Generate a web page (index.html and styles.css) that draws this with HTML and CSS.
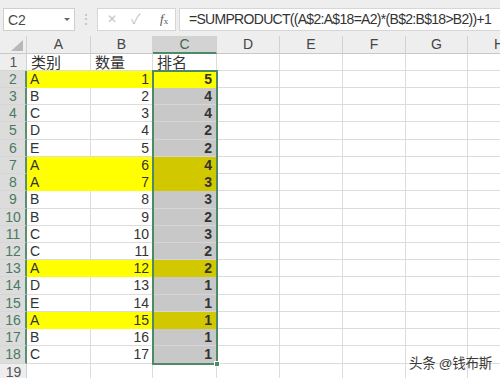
FILE: index.html
```html
<!DOCTYPE html>
<html>
<head>
<meta charset="utf-8">
<link rel="stylesheet" href="styles.css">
</head>
<body>
<div class="app">
  <div class="fbar">
    <div class="namebox"><span>C2</span><span class="dd"></span></div>
    <div class="grip">⋮</div>
    <div class="fbtns">
      <span class="btn x">✕</span>
      <span class="btn ok">✓</span>
      <span class="btn fx"><i>f</i><sub>x</sub></span>
    </div>
    <div class="formula">=SUMPRODUCT((A$2:A$18=A2)*(B$2:B$18&gt;B2))+1</div>
  </div>
  <div class="sheet">
    <div class="corner"><span class="tri"></span></div>
    <div class="ch">A</div><div class="ch">B</div><div class="ch sel">C</div><div class="ch">D</div><div class="ch">E</div><div class="ch">F</div><div class="ch">G</div><div class="ch">H</div>

    <div class="rh">1</div><div class="c cj">类别</div><div class="c cj">数量</div><div class="c cj">排名</div><div class="c"></div><div class="c"></div><div class="c"></div><div class="c"></div><div class="c"></div>

    <div class="rh s">2</div><div class="c y">A</div><div class="c y n">1</div><div class="c y n b">5</div><div class="c"></div><div class="c"></div><div class="c"></div><div class="c"></div><div class="c"></div>
    <div class="rh s">3</div><div class="c">B</div><div class="c n">2</div><div class="c g n b">4</div><div class="c"></div><div class="c"></div><div class="c"></div><div class="c"></div><div class="c"></div>
    <div class="rh s">4</div><div class="c">C</div><div class="c n">3</div><div class="c g n b">4</div><div class="c"></div><div class="c"></div><div class="c"></div><div class="c"></div><div class="c"></div>
    <div class="rh s">5</div><div class="c">D</div><div class="c n">4</div><div class="c g n b">2</div><div class="c"></div><div class="c"></div><div class="c"></div><div class="c"></div><div class="c"></div>
    <div class="rh s">6</div><div class="c">E</div><div class="c n">5</div><div class="c g n b">2</div><div class="c"></div><div class="c"></div><div class="c"></div><div class="c"></div><div class="c"></div>
    <div class="rh s">7</div><div class="c y">A</div><div class="c y n">6</div><div class="c o n b">4</div><div class="c"></div><div class="c"></div><div class="c"></div><div class="c"></div><div class="c"></div>
    <div class="rh s">8</div><div class="c y">A</div><div class="c y n">7</div><div class="c o n b">3</div><div class="c"></div><div class="c"></div><div class="c"></div><div class="c"></div><div class="c"></div>
    <div class="rh s">9</div><div class="c">B</div><div class="c n">8</div><div class="c g n b">3</div><div class="c"></div><div class="c"></div><div class="c"></div><div class="c"></div><div class="c"></div>
    <div class="rh s">10</div><div class="c">B</div><div class="c n">9</div><div class="c g n b">2</div><div class="c"></div><div class="c"></div><div class="c"></div><div class="c"></div><div class="c"></div>
    <div class="rh s">11</div><div class="c">C</div><div class="c n">10</div><div class="c g n b">3</div><div class="c"></div><div class="c"></div><div class="c"></div><div class="c"></div><div class="c"></div>
    <div class="rh s">12</div><div class="c">C</div><div class="c n">11</div><div class="c g n b">2</div><div class="c"></div><div class="c"></div><div class="c"></div><div class="c"></div><div class="c"></div>
    <div class="rh s">13</div><div class="c y">A</div><div class="c y n">12</div><div class="c o n b">2</div><div class="c"></div><div class="c"></div><div class="c"></div><div class="c"></div><div class="c"></div>
    <div class="rh s">14</div><div class="c">D</div><div class="c n">13</div><div class="c g n b">1</div><div class="c"></div><div class="c"></div><div class="c"></div><div class="c"></div><div class="c"></div>
    <div class="rh s">15</div><div class="c">E</div><div class="c n">14</div><div class="c g n b">1</div><div class="c"></div><div class="c"></div><div class="c"></div><div class="c"></div><div class="c"></div>
    <div class="rh s">16</div><div class="c y">A</div><div class="c y n">15</div><div class="c o n b">1</div><div class="c"></div><div class="c"></div><div class="c"></div><div class="c"></div><div class="c"></div>
    <div class="rh s">17</div><div class="c">B</div><div class="c n">16</div><div class="c g n b">1</div><div class="c"></div><div class="c"></div><div class="c"></div><div class="c"></div><div class="c"></div>
    <div class="rh s">18</div><div class="c">C</div><div class="c n">17</div><div class="c g n b">1</div><div class="c"></div><div class="c"></div><div class="c"></div><div class="c"></div><div class="c"></div>
    <div class="rh">19</div><div class="c"></div><div class="c"></div><div class="c"></div><div class="c"></div><div class="c"></div><div class="c"></div><div class="c"></div><div class="c"></div>

    <div class="selbox"><span class="handle"></span></div>
    <div class="mark">头条 @钱布斯</div>
  </div>
</div>
</body>
</html>
```

FILE: styles.css
```css
* { box-sizing: border-box; }
html, body { margin: 0; padding: 0; }
body {
  width: 500px;
  height: 378px;
  overflow: hidden;
  background: #ffffff;
  font-family: "Liberation Sans", "Noto Sans CJK SC", sans-serif;
  color: #333;
}
.app { width: 500px; height: 378px; overflow: hidden; }

.fbar {
  height: 36px;
  background: #eeeeee;
  display: flex;
  align-items: flex-start;
  padding-top: 8px;
  padding-left: 3px;
}
.namebox {
  width: 72px;
  height: 23px;
  background: #fff;
  border: 1px solid #cfcfcf;
  display: flex;
  align-items: center;
  justify-content: space-between;
  padding: 0 4px 0 4px;
  font-size: 14px;
  color: #4a4a4a;
}
.dd {
  width: 0; height: 0;
  border-left: 3px solid transparent;
  border-right: 3px solid transparent;
  border-top: 3px solid #666;
}
.grip {
  width: 22px;
  text-align: center;
  color: #b5b5b5;
  font-size: 12px;
  line-height: 23px;
}
.fbtns {
  width: 79px;
  height: 23px;
  background: #fff;
  border: 1px solid #d6d6d6;
  display: flex;
  align-items: center;
  padding-left: 9px;
}
.btn { color: #c4c4c4; font-size: 12px; line-height: 21px; }
.btn.x { width: 24px; }
.btn.ok { width: 29px; font-size: 14px; }
.btn.fx { color: #555; font-family: "Liberation Serif", serif; font-size: 13px; }
.btn.fx sub { font-size: 9px; vertical-align: -1px; }
.formula {
  flex: 1;
  height: 23px;
  margin-left: 3px;
  background: #fff;
  border: 1px solid #d6d6d6;
  border-right: none;
  font-size: 14px;
  letter-spacing: -0.7px;
  line-height: 21px;
  padding-left: 9px;
  color: #333;
  white-space: nowrap;
}

.sheet {
  position: relative;
  display: grid;
  grid-template-columns: 27px 64px 62px 64px 63px 63px 63px 62px 63px;
  grid-template-rows: 17.6px repeat(19, 17.23px);
  background: #fff;
}
.corner {
  background: #eeeeee;
  border-right: 1px solid #d2d2d2;
  border-bottom: 1px solid #c8c8c8;
  position: relative;
}
.tri {
  position: absolute;
  right: 3px;
  bottom: 2px;
  width: 0; height: 0;
  border-left: 12px solid transparent;
  border-bottom: 11px solid #b8b8b8;
}
.ch {
  background: #eeeeee;
  border-right: 1px solid #d2d2d2;
  border-bottom: 1px solid #c8c8c8;
  text-align: center;
  font-size: 14px;
  line-height: 17px;
  color: #454545;
}
.ch.sel {
  background: #d3d3d3;
  border-bottom: 2px solid #4f8a66;
  color: #3d6b50;
}
.rh {
  background: #eeeeee;
  border-right: 1px solid #d2d2d2;
  border-bottom: 1px solid #d6d6d6;
  text-align: center;
  font-size: 14px;
  line-height: 17px;
  color: #555;
  padding-left: 1px;
}
.rh.s {
  background: #dcdcdc;
  color: #4a7a5e;
  border-right: 2px solid #5a8f70;
}
.c {
  border-right: 1px solid #dcdcdc;
  border-bottom: 1px solid #dcdcdc;
  font-size: 14px;
  line-height: 17px;
  padding: 0 3px;
  white-space: nowrap;
  overflow: hidden;
  color: #333;
}
.c.cj { font-size: 15px; padding-left: 4px; }
.c.n { text-align: right; }
.c.b { font-weight: bold; padding-right: 4px; }
.c.y { background: #ffff00; border-color: #ffff00; }
.c.g { background: #c8c8c8; border-bottom-color: #d6d6d6; border-right-color: #c8c8c8; }
.c.o { background: #d1c800; border-color: #d1c800; }

.selbox {
  position: absolute;
  left: 152px;
  top: 34px;
  width: 66px;
  height: 295px;
  border: 2px solid #4f8a66;
  z-index: 2;
  pointer-events: none;
}
.handle {
  position: absolute;
  right: -4px;
  bottom: -4px;
  width: 6px;
  height: 6px;
  background: #4f8a66;
  border: 1px solid #fff;
}
.mark {
  position: absolute;
  left: 409px;
  top: 316px;
  font-size: 13.5px;
  color: #3a3a3a;
  letter-spacing: -0.3px;
  z-index: 3;
}
```
